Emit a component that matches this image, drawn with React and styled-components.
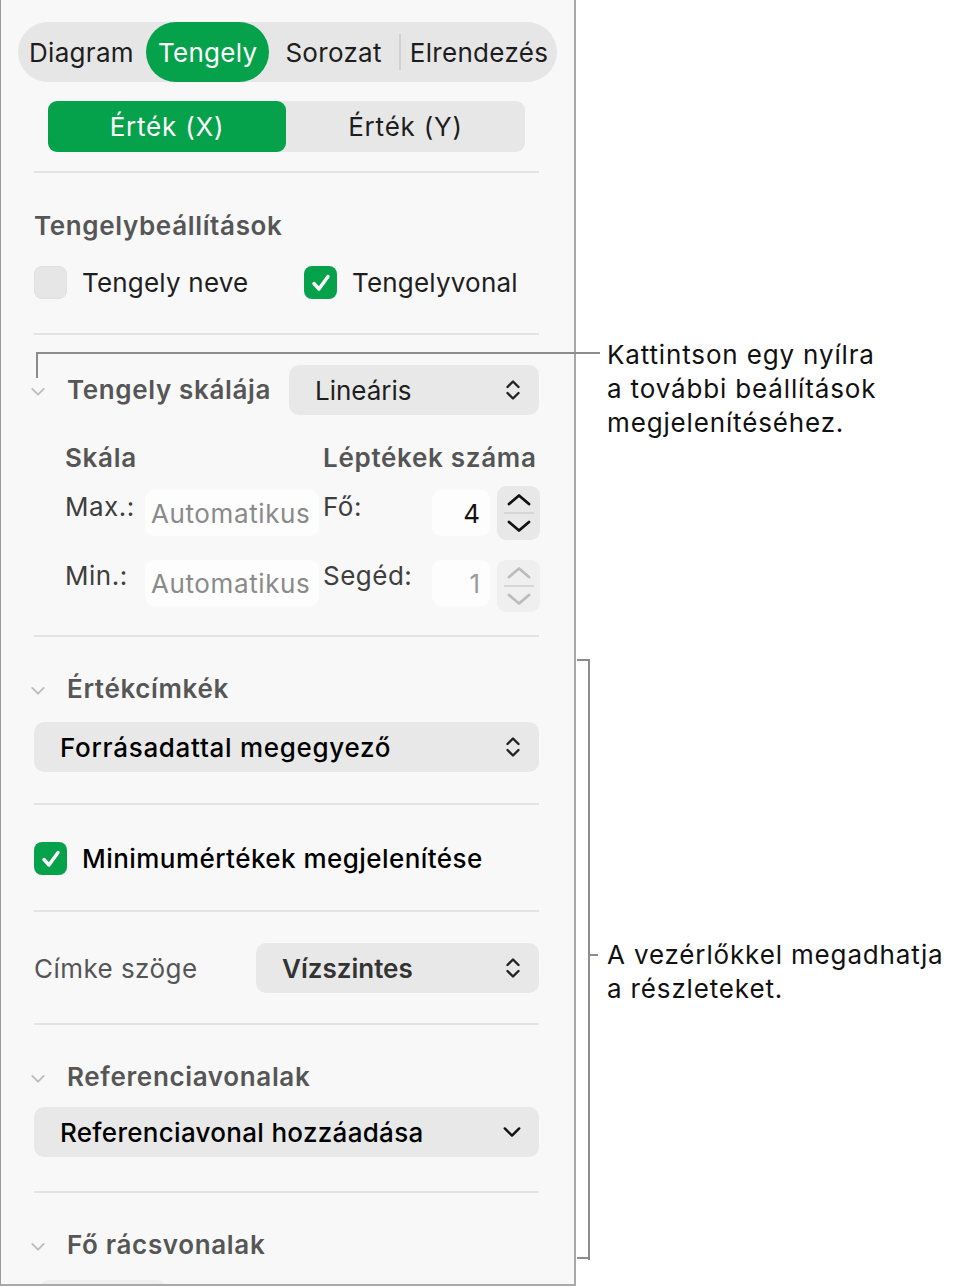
import React from "react";
import styled, { createGlobalStyle } from "styled-components";

const GREEN = "#05a24b";

const GlobalStyle = createGlobalStyle`
  html, body {
    margin: 0;
    padding: 0;
    background: #ffffff;
  }
  body {
    font-family: "Inter", "Noto Sans", sans-serif;
    -webkit-font-smoothing: antialiased;
  }
`;

const ChevronDown = ({ color = "#bdbdbd", size = 16 }) => (
  <svg width={size} height={size * 0.6} viewBox="0 0 16 10" fill="none">
    <path d="M2 2 L8 8 L14 2" stroke={color} strokeWidth="2" strokeLinecap="round" strokeLinejoin="round" />
  </svg>
);

const UpDown = () => (
  <svg width="18" height="24" viewBox="0 0 18 24" fill="none">
    <path d="M3.5 9 L9 3.5 L14.5 9" stroke="#222" strokeWidth="2.4" strokeLinecap="round" strokeLinejoin="round" />
    <path d="M3.5 15 L9 20.5 L14.5 15" stroke="#222" strokeWidth="2.4" strokeLinecap="round" strokeLinejoin="round" />
  </svg>
);

const Check = () => (
  <svg width="24" height="24" viewBox="0 0 24 24" fill="none">
    <path d="M5 12.5 L10 18 L19 5.5" stroke="#fff" strokeWidth="3.4" strokeLinecap="round" strokeLinejoin="round" />
  </svg>
);

const StepperArrow = ({ up, color }) => (
  <svg width="26" height="14" viewBox="0 0 26 14" fill="none">
    <path
      d={up ? "M3 11 L13 2.5 L23 11" : "M3 3 L13 11.5 L23 3"}
      stroke={color}
      strokeWidth="2.8"
      strokeLinecap="round"
      strokeLinejoin="round"
    />
  </svg>
);

export default function App() {
  return (
    <Page>
      <GlobalStyle />
      <Panel>
        <TabBar>
          <Tab>Diagram</Tab>
          <Tab $active>Tengely</Tab>
          <Tab>Sorozat</Tab>
          <TabDivider />
          <Tab>Elrendezés</Tab>
        </TabBar>

        <Segmented>
          <Segment $active>Érték (X)</Segment>
          <Segment>Érték (Y)</Segment>
        </Segmented>

        <Divider $top={19} />

        <Heading $top={37}>Tengelybeállítások</Heading>
        <CheckRow $top={24}>
          <CheckItem $width={270}>
            <Box />
            <CheckLabel>Tengely neve</CheckLabel>
          </CheckItem>
          <CheckItem>
            <Box $checked>
              <Check />
            </Box>
            <CheckLabel>Tengelyvonal</CheckLabel>
          </CheckItem>
        </CheckRow>

        <Divider $top={34} />

        <ScaleRow $top={30}>
          <Disclosure>
            <ChevronDown />
          </Disclosure>
          <Heading as="span" $grow>Tengely skálája</Heading>
          <Popup $width={250}>
            <PopupText $weight={400} $color="#1e1e1e" $spacing={0}>Lineáris</PopupText>
            <UpDown />
          </Popup>
        </ScaleRow>

        <ScaleGrid>
          <SubHead $col={1} $span={2}>Skála</SubHead>
          <SubHead $col={3} $span={3}>Léptékek száma</SubHead>

          <FieldLabel>Max.:</FieldLabel>
          <Field>Automatikus</Field>
          <FieldLabel>Fő:</FieldLabel>
          <NumberField>4</NumberField>
          <Stepper>
            <StepperArrow up color="#111" />
            <StepperLine />
            <StepperArrow color="#111" />
          </Stepper>

          <FieldLabel>Min.:</FieldLabel>
          <Field>Automatikus</Field>
          <FieldLabel>Segéd:</FieldLabel>
          <NumberField $muted>1</NumberField>
          <Stepper $disabled>
            <StepperArrow up color="#bcbcbc" />
            <StepperLine />
            <StepperArrow color="#bcbcbc" />
          </Stepper>
        </ScaleGrid>

        <Divider $top={23} />

        <SectionHead $top={36}>
          <Disclosure>
            <ChevronDown />
          </Disclosure>
          <Heading as="span">Értékcímkék</Heading>
        </SectionHead>
        <Popup $top={17}>
          <PopupText $weight={500} $color="#000" $spacing={0.7}>Forrásadattal megegyező</PopupText>
          <UpDown />
        </Popup>

        <Divider $top={31} />

        <CheckRow $top={37}>
          <CheckItem>
            <Box $checked>
              <Check />
            </Box>
            <CheckLabel $weight={500} $color="#000" $spacing={0.45}>
              Minimumértékek megjelenítése
            </CheckLabel>
          </CheckItem>
        </CheckRow>

        <Divider $top={35} />

        <AngleRow $top={31}>
          <AngleLabel>Címke szöge</AngleLabel>
          <Popup $width={283}>
            <PopupText $weight={600} $color="#333" $spacing={0}>Vízszintes</PopupText>
            <UpDown />
          </Popup>
        </AngleRow>

        <Divider $top={30} />

        <SectionHead $top={36}>
          <Disclosure>
            <ChevronDown />
          </Disclosure>
          <Heading as="span">Referenciavonalak</Heading>
        </SectionHead>
        <Popup $top={14}>
          <PopupText $weight={500} $color="#000" $spacing={0.3}>Referenciavonal hozzáadása</PopupText>
          <ChevronDown color="#111" size={20} />
        </Popup>

        <Divider $top={34} />

        <SectionHead $top={36}>
          <Disclosure>
            <ChevronDown />
          </Disclosure>
          <Heading as="span">Fő rácsvonalak</Heading>
        </SectionHead>
        <PeekControl />
      </Panel>

      {/* leader from the disclosure arrow out to the first note */}
      <LeaderH style={{ left: 36, top: 352, width: 564 }} />
      <LeaderV style={{ left: 36, top: 352, height: 26 }} />
      <Note style={{ left: 607, top: 338 }}>
        Kattintson egy nyílra
        <br />a további beállítások
        <br />
        megjelenítéséhez.
      </Note>

      {/* bracket around the lower controls */}
      <LeaderV style={{ left: 588, top: 659, height: 601 }} />
      <LeaderH style={{ left: 577, top: 659, width: 13 }} />
      <LeaderH style={{ left: 577, top: 1257, width: 13 }} />
      <LeaderH style={{ left: 588, top: 954, width: 10 }} />
      <Note style={{ left: 607, top: 938 }}>
        A vezérlőkkel megadhatja
        <br />a részleteket.
      </Note>
    </Page>
  );
}

const Page = styled.div`
  position: relative;
  width: 955px;
  height: 1287px;
  overflow: hidden;
`;

const Panel = styled.div`
  box-sizing: border-box;
  width: 576px;
  height: 1286px;
  overflow: hidden;
  background: #f8f8f8;
  border-left: 1.5px solid #9c9c9c;
  border-right: 2px solid #a9a9a9;
  border-bottom: 2px solid #a9a9a9;
  padding: 22px 35px 0 33px;
  display: flex;
  flex-direction: column;
  & > * {
    flex-shrink: 0;
  }
`;

const TabBar = styled.div`
  display: flex;
  align-items: center;
  height: 60px;
  margin: 0 -18px 0 -16px;
  background: #e6e6e6;
  border-radius: 30px;
  & > * {
    flex-shrink: 0;
  }
`;

const Tab = styled.div`
  display: flex;
  align-items: center;
  height: 60px;
  padding: 0 12px;
  margin-right: ${(p) => (p.$active ? "4px" : "0")};
  border-radius: 30px;
  font-size: 26px;
  letter-spacing: 0.3px;
  color: ${(p) => (p.$active ? "#fff" : "#1d1d1d")};
  background: ${(p) => (p.$active ? GREEN : "transparent")};
  &:first-child {
    padding-left: 11px;
  }
`;

const TabDivider = styled.div`
  width: 2px;
  height: 36px;
  margin: 0 -3px 0 5px;
  background: #d2d2d2;
`;

const Segmented = styled.div`
  display: flex;
  height: 51px;
  margin: 19px 14px 0;
  background: #e7e7e7;
  border-radius: 9px;
`;

const Segment = styled.div`
  flex: ${(p) => (p.$active ? "0 0 238px" : "1")};
  display: flex;
  align-items: center;
  justify-content: center;
  border-radius: 9px;
  font-size: 26px;
  letter-spacing: 0.8px;
  color: ${(p) => (p.$active ? "#fff" : "#1d1d1d")};
  background: ${(p) => (p.$active ? GREEN : "transparent")};
`;

const Divider = styled.div`
  height: 2px;
  margin-top: ${(p) => p.$top}px;
  background: #e3e3e3;
`;

const Heading = styled.div`
  margin-top: ${(p) => p.$top || 0}px;
  flex: ${(p) => (p.$grow ? "1" : "none")};
  font-size: 26px;
  line-height: 32px;
  font-weight: 600;
  letter-spacing: 0.65px;
  color: #565656;
  white-space: nowrap;
`;

const CheckRow = styled.div`
  display: flex;
  align-items: center;
  margin-top: ${(p) => p.$top}px;
  height: 33px;
`;

const CheckItem = styled.div`
  display: flex;
  align-items: center;
  gap: 15px;
  width: ${(p) => (p.$width ? `${p.$width}px` : "auto")};
`;

const Box = styled.div`
  box-sizing: border-box;
  width: 33px;
  height: 33px;
  border-radius: 8px;
  display: flex;
  align-items: center;
  justify-content: center;
  background: ${(p) => (p.$checked ? GREEN : "#e6e6e6")};
  border: ${(p) => (p.$checked ? "none" : "1px solid #e0e0e0")};
`;

const CheckLabel = styled.span`
  font-size: 26px;
  line-height: 32px;
  letter-spacing: ${(p) => p.$spacing ?? 0.2}px;
  font-weight: ${(p) => p.$weight || 400};
  color: ${(p) => p.$color || "#1e1e1e"};
`;

const ScaleRow = styled.div`
  display: flex;
  align-items: center;
  margin-top: ${(p) => p.$top}px;
`;

const SectionHead = styled.div`
  display: flex;
  align-items: center;
  margin-top: ${(p) => p.$top}px;
`;

const Disclosure = styled.div`
  width: 37px;
  margin-left: -4px;
  padding-top: 4px;
  display: flex;
  align-items: center;
`;

const Popup = styled.div`
  box-sizing: border-box;
  display: flex;
  align-items: center;
  justify-content: space-between;
  height: 50px;
  margin-top: ${(p) => p.$top || 0}px;
  width: ${(p) => (p.$width ? `${p.$width}px` : "auto")};
  padding: 0 17px 0 0;
  background: #e8e8e8;
  border-radius: 10px;
  flex-shrink: 0;
`;

const PopupText = styled.span`
  padding-left: 26px;
  font-size: 26px;
  letter-spacing: ${(p) => p.$spacing}px;
  font-weight: ${(p) => p.$weight};
  color: ${(p) => p.$color};
`;

/* Skála / Léptékek száma: header row, then the max and min rows */
const ScaleGrid = styled.div`
  display: grid;
  grid-template-columns: 84px 174px 109px 65px 43px;
  grid-template-rows: 44px 70px 56px;
  align-items: start;
  margin: 27px 0 0 31px;
  & > :nth-child(n + 8) {
    align-self: end;
  }
`;

const SubHead = styled.div`
  grid-column: ${(p) => p.$col} / span ${(p) => p.$span};
  font-size: 26px;
  line-height: 32px;
  font-weight: 600;
  letter-spacing: 0.7px;
  color: #555;
  white-space: nowrap;
`;

const FieldLabel = styled.div`
  margin-top: 5px;
  font-size: 26px;
  line-height: 32px;
  letter-spacing: 0.5px;
  color: #3e3e3e;
  white-space: nowrap;
  &:nth-child(n + 8) {
    align-self: start;
    margin-top: 4px;
  }
`;

const Field = styled.div`
  box-sizing: border-box;
  height: 46px;
  margin: 4px 4px 0 -4px;
  padding: 8px 0 0 6px;
  border-radius: 9px;
  background: #fdfdfd;
  font-size: 26px;
  line-height: 32px;
  letter-spacing: 0.6px;
  color: #8a8a8a;
  white-space: nowrap;
  &:nth-child(n + 8) {
    align-self: start;
    margin-top: 4px;
  }
`;

const NumberField = styled.div`
  box-sizing: border-box;
  height: 46px;
  margin: 4px 7px 0 0;
  padding: 8px 10px 0 0;
  border-radius: 9px;
  background: #fdfdfd;
  text-align: right;
  font-size: 26px;
  line-height: 32px;
  color: ${(p) => (p.$muted ? "#999" : "#111")};
  &:nth-child(n + 8) {
    align-self: start;
    margin-top: 4px;
  }
`;

const Stepper = styled.div`
  display: flex;
  flex-direction: column;
  align-items: center;
  justify-content: center;
  gap: 5px;
  height: ${(p) => (p.$disabled ? 52 : 54)}px;
  border-radius: 9px;
  background: ${(p) => (p.$disabled ? "#efefef" : "#e8e8e8")};
`;

const StepperLine = styled.div`
  width: 30px;
  height: 2px;
  background: #d6d6d6;
`;

const AngleRow = styled.div`
  display: flex;
  align-items: center;
  justify-content: space-between;
  margin-top: ${(p) => p.$top}px;
`;

const AngleLabel = styled.span`
  font-size: 26px;
  letter-spacing: 0.45px;
  color: #555;
`;

const PeekControl = styled.div`
  width: 130px;
  height: 30px;
  margin: 19px 0 0 4px;
  border-radius: 12px;
  background: #efefef;
`;

const LeaderH = styled.div`
  position: absolute;
  height: 2px;
  background: #8d8d8d;
`;

const LeaderV = styled.div`
  position: absolute;
  width: 2px;
  background: #8d8d8d;
`;

const Note = styled.div`
  position: absolute;
  font-size: 26px;
  line-height: 34px;
  letter-spacing: 0.85px;
  color: #111;
  white-space: nowrap;
`;
